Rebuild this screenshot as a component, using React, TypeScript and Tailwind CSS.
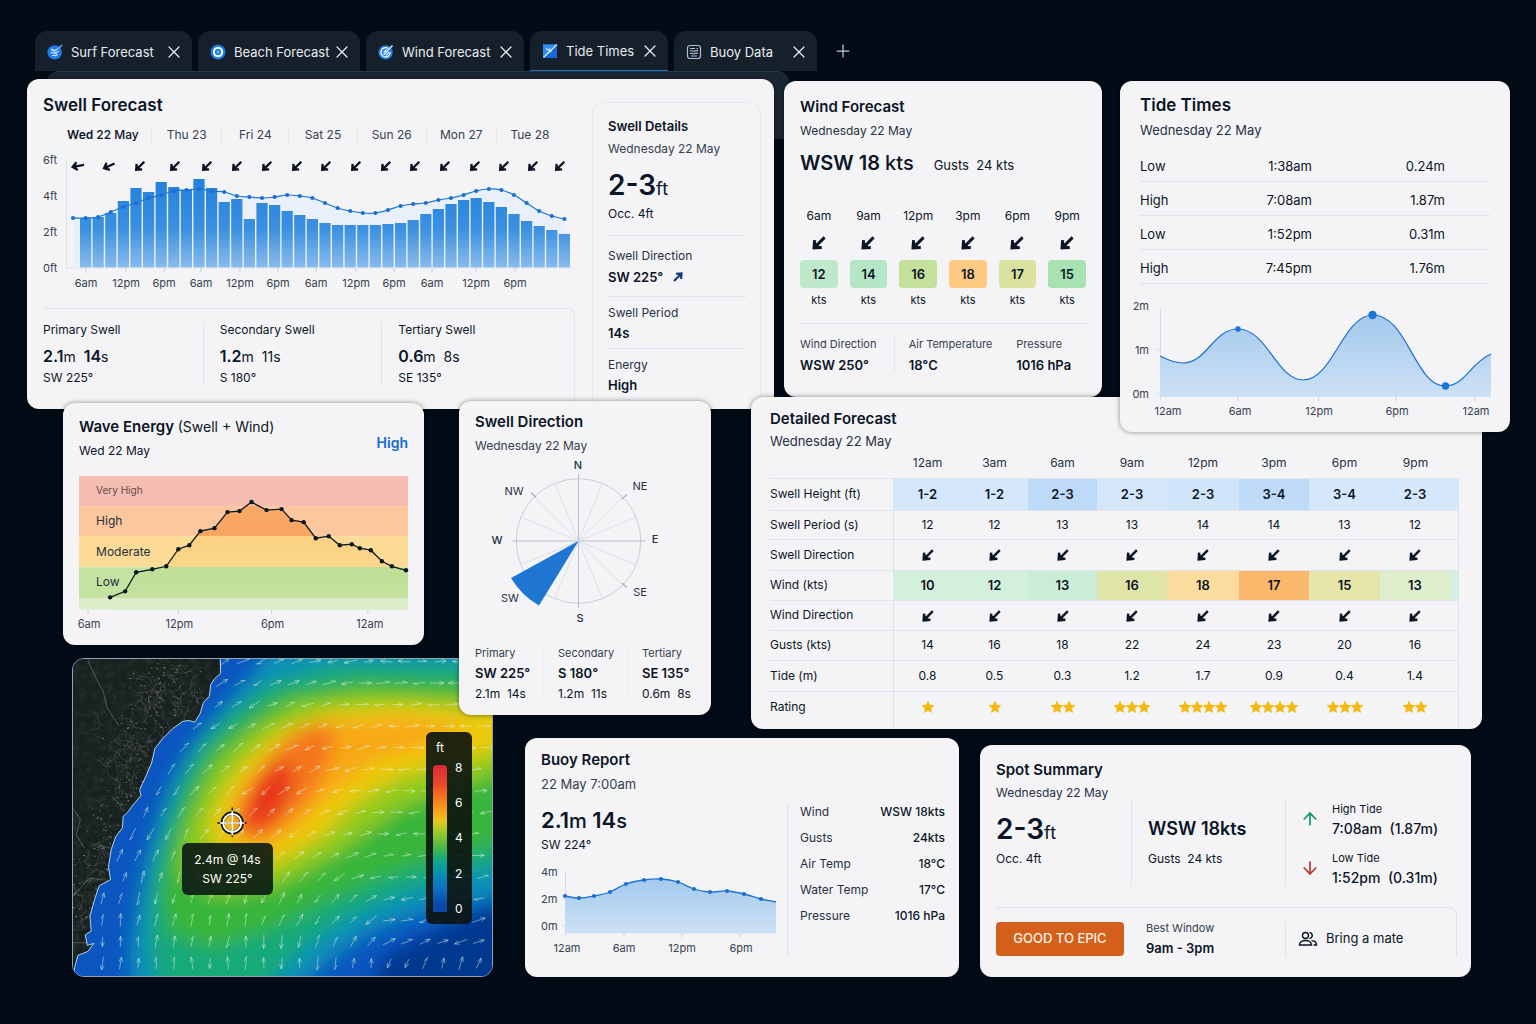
import React from "react";
import { ArrowDown, ArrowUp, Plus, X } from "lucide-react";

const card = "bg-[#f4f4f6] rounded-xl shadow-[0_0_5px_rgba(0,0,0,0.45)] text-[#0c1526]";

type Point = [number, number];

const toLine = (points: Point[]) => points.map((p) => p.join(",")).join(" ");

// Catmull-Rom spline through the points, as cubic beziers
const toCurve = (points: Point[]) => {
    let d = `M${points[0][0]} ${points[0][1]}`;
    for (let i = 0; i < points.length - 1; i++) {
        const p0 = points[i - 1] || points[i];
        const p1 = points[i];
        const p2 = points[i + 1];
        const p3 = points[i + 2] || p2;
        d += ` C${p1[0] + (p2[0] - p0[0]) / 6} ${p1[1] + (p2[1] - p0[1]) / 6} ${p2[0] - (p3[0] - p1[0]) / 6} ${p2[1] - (p3[1] - p1[1]) / 6} ${p2[0]} ${p2[1]}`;
    }
    return d;
};

const ArrowShape: React.FC = () => (
    <>
        <path d="M10.8 1.2 4.2 7.8M2.2 3.6l-.5 6.7 6.7-.5" fill="none" stroke="currentColor" strokeWidth="2.5" />
        <path d="M2.2 4.6v5.2h5.2z" fill="currentColor" />
    </>
);

const DirArrow: React.FC<{ className?: string }> = ({ className = "size-3" }) => (
    <svg viewBox="0 0 12 12" className={`inline-block ${className}`} aria-hidden="true">
        <ArrowShape />
    </svg>
);

/* ---------- Tabs ---------- */

const SurfIcon = () => (
    <svg viewBox="0 0 16 16" className="size-4" fill="none">
        <circle cx="7.6" cy="8.4" r="7.2" fill="#1c7be8" />
        <path d="M4 6.5c2-2 3 1 5-.5s2-1 3-2M3.6 9c2-1.5 3 1.2 5 0s2-1.5 3.4-1.5M5 11.8c1.5-1 2.5.6 4.500-.6M4.500 4.500l6 7" stroke="#cfe5ff" strokeWidth="1.1" />
        <path d="m11 5 4-4" stroke="#5aa6ff" strokeWidth="1.6" />
    </svg>
);

const BeachIcon = () => (
    <svg viewBox="0 0 16 16" className="size-4" fill="none">
        <circle cx="8" cy="8" r="7.5" fill="#1c7be8" />
        <circle cx="8" cy="8" r="4.2" stroke="#fff" strokeWidth="2" />
        <circle cx="8" cy="8" r="1.5" fill="#6db1ff" />
    </svg>
);

const WindIcon = () => (
    <svg viewBox="0 0 16 16" className="size-4" fill="none">
        <circle cx="7.6" cy="8.4" r="7.2" fill="#1c7be8" />
        <path d="M10.5 4.6A4.7 4.7 0 1 0 12.3 8" stroke="#fff" strokeWidth="1.3" />
        <path d="M5.5 11l9-9.5M5.5 8.5l3-3M8 11.5l3-3.5" stroke="#d8eaff" strokeWidth="1.4" />
    </svg>
);

const TideIcon = () => (
    <svg viewBox="0 0 16 16" className="size-4" fill="none">
        <path d="M1 1.5h14V15H1z" fill="#1668d8" />
        <path d="M1 1.5h14L1 15z" fill="#2f8cf5" />
        <path d="M1.5 14.5 15 1.5M4 5.500l3 2 1-2M7 9.500l3-2" stroke="#d8eaff" strokeWidth="1.2" />
    </svg>
);

const BuoyIcon = () => (
    <svg viewBox="0 0 16 16" className="size-4" fill="none" stroke="#a9c0da" strokeWidth="1.2">
        <rect x="1.5" y="1.5" width="13" height="13" rx="2.5" />
        <path d="M4 4.5h5M4 7c2-1 3 1 4.5 0s2 0 3.5-.5M4 9.5c2-1 3 1 4.5 0s2 0 3.5-.5M5 12h6M10.5 4.5H12" />
    </svg>
);

const tabs = [
    { label: "Surf Forecast", icon: <SurfIcon />, style: "w-[157px]" },
    { label: "Beach Forecast", icon: <BeachIcon />, style: "w-[162px]" },
    { label: "Wind Forecast", icon: <WindIcon />, style: "w-[158px]" },
    { label: "Tide Times", icon: <TideIcon />, style: "w-[138px] border-b border-[#1f72b8]" },
    { label: "Buoy Data", icon: <BuoyIcon />, style: "w-[143px]" },
];

const TabBar: React.FC = () => (
    <nav className="flex items-center gap-1.5 pl-2">
        {tabs.map((tab) => (
            <div key={tab.label} className={`flex h-10 items-center rounded-t-xl bg-[#15202b] pt-px pr-2 pl-3 text-[#e9edf2] ${tab.style}`}>
                <button className="flex items-center gap-2 text-[13px] leading-5 whitespace-nowrap">
                    {tab.icon}
                    {tab.label}
                </button>
                <button className="ml-auto" aria-label={`Close ${tab.label}`}>
                    <X className="size-5" strokeWidth={1.5} />
                </button>
            </div>
        ))}
        <button className="ml-2.5 text-[#c3cad3]" aria-label="New tab">
            <Plus className="size-5" strokeWidth={1.5} />
        </button>
    </nav>
);

/* ---------- Swell forecast ---------- */

const days = ["Thu 23", "Fri 24", "Sat 25", "Sun 26", "Mon 27", "Tue 28"];
const swellArrows = [78, 109, 140, 175, 207, 237, 267, 297, 326, 356, 386, 415, 445, 475, 504, 533, 560];
const swellBars = [
    218, 217, 213, 201, 188, 192, 182, 187, 190, 179, 188, 202, 199, 219, 203, 205, 211, 215, 219, 223,
    225, 225, 225, 225, 224, 223, 220, 214, 209, 204, 200, 198, 202, 207, 214, 221, 226, 230, 234,
];
const swellLine: Point[] = [
    218, 218, 217, 212, 207, 203, 198, 195, 191, 190, 189, 191, 192, 196, 197, 198, 197, 195, 196, 198,
    203, 208, 211, 213, 213, 210, 206, 204, 203, 200, 198, 195, 191, 189, 190, 195, 203, 211, 216, 219,
].map((y, i) => [73 + i * 12.6, y]);
const swellHours: [number, string][] = [
    [86, "6am"], [126, "12pm"], [164, "6pm"], [201, "6am"], [240, "12pm"], [278, "6pm"],
    [316, "6am"], [356, "12pm"], [394, "6pm"], [432, "6am"], [476, "12pm"], [515, "6pm"],
];

const SwellChart: React.FC = () => (
    <svg viewBox="43 150 536 142" className="mt-[5px] w-full text-[11px]" role="img" aria-label="Swell height by hour">
        <defs>
            <linearGradient id="bar" x1="0" y1="180" x2="0" y2="268" gradientUnits="userSpaceOnUse">
                <stop offset="0" stopColor="#2381dc" />
                <stop offset="0.55" stopColor="#3b90e0" />
                <stop offset="1" stopColor="#8abcec" />
            </linearGradient>
        </defs>
        <path d="M66.5 160v108M66.5 268H573" stroke="#dfe3ea" fill="none" />
        <path d={`${toCurve(swellLine)} L564 268 L73 268Z`} fill="#e9f0fa" />
        {swellBars.map((y, i) => (
            <rect key={i} x={80 + i * 12.6} y={y} width="11.2" height={267.5 - y} fill="url(#bar)" />
        ))}
        <path d={toCurve(swellLine)} fill="none" stroke="#1c74d4" strokeWidth="1.2" />
        {swellLine.map(([x, y]) => (
            <circle key={x} cx={x} cy={y} r="2.1" fill="#1a6fd0" />
        ))}
        {swellArrows.map((x, i) => (
            <g key={x} className="text-[#0b1424]" transform={`translate(${x} 166) rotate(${i < 2 ? 35 - i * 15 : 0}) scale(0.9) translate(-6 -6)`}>
                <ArrowShape />
            </g>
        ))}
        {["6ft", "4ft", "2ft", "0ft"].map((t, i) => (
            <text key={t} x="43" y={164 + i * 36} fill="#36414f">{t}</text>
        ))}
        {swellHours.map(([x, t]) => (
            <g key={x}>
                <path d={`M${x} 268v4`} stroke="#c9cfd8" />
                <text x={x} y="287" textAnchor="middle" fill="#36414f">{t}</text>
            </g>
        ))}
    </svg>
);

const swells = [
    { name: "Primary Swell", height: "2.1", period: "14", dir: "SW 225°", strong: true },
    { name: "Secondary Swell", height: "1.2", period: "11", dir: "S 180°" },
    { name: "Tertiary Swell", height: "0.6", period: "8", dir: "SE 135°" },
];

const SwellForecast: React.FC = () => (
    <section className={`${card} grid grid-cols-[536fr_169fr] gap-[13px] pr-[13px] pl-4`}>
        <div className="pt-4">
            <h2 className="text-[17px] leading-5 font-semibold">Swell Forecast</h2>
            <div className="mt-2.5 mr-4 ml-6 grid grid-cols-[84fr_70fr_67fr_68fr_69fr_70fr_67fr] text-[12px] leading-5 text-[#36414f]">
                <span className="font-semibold text-[#0c1526]">Wed <span className="font-medium">22 May</span></span>
                {days.map((d) => (
                    <span key={d} className="border-l border-[#e6e9ee] text-center">{d}</span>
                ))}
            </div>
            <SwellChart />
            <div className="mt-4 mr-1 grid grid-cols-[160fr_179fr_193fr] rounded-tr-lg border-t border-r border-[#e1e5eb] pt-[13px] pb-5">
                {swells.map((s, i) => (
                    <div key={s.name} className={i > 0 ? "border-l border-[#e1e5eb] pl-4" : ""}>
                        <p className="text-[12px] leading-4">{s.name}</p>
                        <p className="mt-2 h-5 text-[14px] leading-5">
                            <b className="text-[16px] font-semibold">{s.height}</b>m{" "}
                            {s.strong ? <b className="ml-1 text-[16px] font-semibold">{s.period}</b> : <span className="ml-1">{s.period}</span>}s
                        </p>
                        <p className="mt-1 text-[12px] leading-4">{s.dir}</p>
                    </div>
                ))}
            </div>
        </div>
        <aside className="mt-[23px] rounded-t-xl border-x border-t border-[#e6e9ee] pt-[15px] pr-3.5 pb-4 pl-[15px]">
            <h3 className="text-[13px] leading-4 font-semibold">Swell Details</h3>
            <p className="mt-[7px] text-[12px] leading-4 text-[#36414f]">Wednesday 22 May</p>
            <p className="mt-3 h-8 text-[18px] leading-8"><b className="text-[28px] font-semibold">2-3</b>ft</p>
            <p className="mt-[5px] text-[12px] leading-4">Occ. 4ft</p>
            <div className="mt-[13px] border-t border-[#dfe3ea] pt-3 pb-[11px]">
                <p className="text-[12px] leading-4 text-[#273142]">Swell Direction</p>
                <p className="mt-[5px] flex items-center gap-2.5 text-[13px] leading-4 font-semibold">
                    SW 225° <DirArrow className="size-2.5 rotate-180 text-[#123a7c]" />
                </p>
            </div>
            <div className="border-t border-[#dfe3ea] pt-2 pb-[7px]">
                <p className="text-[12px] leading-4 text-[#273142]">Swell Period</p>
                <p className="mt-1 text-[13px] leading-4 font-semibold">14s</p>
            </div>
            <div className="border-t border-[#dfe3ea] pt-2">
                <p className="text-[12px] leading-4 text-[#273142]">Energy</p>
                <p className="mt-1 text-[13px] leading-4 font-semibold">High</p>
            </div>
        </aside>
    </section>
);

/* ---------- Wind forecast ---------- */

const winds = [
    { time: "6am", speed: 12, color: "bg-[#bde8ca]" },
    { time: "9am", speed: 14, color: "bg-[#b5e6c6]" },
    { time: "12pm", speed: 16, color: "bg-[#c4e09a]" },
    { time: "3pm", speed: 18, color: "bg-[#fdca84]" },
    { time: "6pm", speed: 17, color: "bg-[#dbe2a0]" },
    { time: "9pm", speed: 15, color: "bg-[#a9e2b2]" },
];

const WindForecast: React.FC = () => (
    <section className={`${card} mt-0.5 ml-2.5 px-4 pt-4 pb-6`}>
        <h2 className="text-[15px] leading-5 font-semibold">Wind Forecast</h2>
        <p className="mt-1.5 text-[12px] leading-4 text-[#273142]">Wednesday 22 May</p>
        <div className="mt-3 flex h-6 items-baseline gap-5 leading-6">
            <p className="text-[20px] font-semibold">WSW 18 <span className="font-medium">kts</span></p>
            <p className="text-[13px]">Gusts&nbsp; 24 kts</p>
        </div>
        <div className="mt-[33px] grid grid-cols-6 gap-3 text-center text-[12px] leading-4">
            {winds.map((w) => (
                <div key={w.time}>
                    <p>{w.time}</p>
                    <DirArrow className="mt-3 size-3.5 align-top" />
                    <p className={`mt-2.5 rounded-sm text-[13px] leading-7 font-semibold ${w.color}`}>{w.speed}</p>
                    <p className="mt-1 text-[11px]">kts</p>
                </div>
            ))}
        </div>
        <div className="mt-[15px] grid grid-cols-[94fr_123fr_70fr] border-t border-[#e1e5eb] pt-3">
            <div>
                <p className="text-[11px] leading-4 text-[#36414f]">Wind Direction</p>
                <p className="mt-[5px] text-[13px] leading-4 font-semibold">WSW 250°</p>
            </div>
            <div className="border-l border-[#e1e5eb] pl-3.5">
                <p className="text-[11px] leading-4 text-[#36414f]">Air Temperature</p>
                <p className="mt-[5px] text-[13px] leading-4 font-semibold">18°C</p>
            </div>
            <div className="whitespace-nowrap">
                <p className="text-[11px] leading-4 text-[#36414f]">Pressure</p>
                <p className="mt-[5px] text-[13px] leading-4 font-semibold">1016 hPa</p>
            </div>
        </div>
    </section>
);

/* ---------- Tide times ---------- */

const tides = [
    ["Low", "1:38am", "0.24m"],
    ["High", "7:08am", "1.87m"],
    ["Low", "1:52pm", "0.31m"],
    ["High", "7:45pm", "1.76m"],
];

const tideCurve =
    "M40 275C48 279 55 282 63 282C87 282 93 248 118 248C147 248 157 299 183 299C213 299 223 234 253 234C287 234 295 305 325 305C345 305 350 282 371 273";

const TideTimes: React.FC = () => (
    <section className={`${card} relative z-10 mt-0.5 px-5 pt-3.5`}>
        <h2 className="text-[17px] leading-5 font-semibold">Tide Times</h2>
        <p className="mt-[7px] text-[13px] leading-4 text-[#273142]">Wednesday 22 May</p>
        <table className="mt-[9px] w-full text-[13px]">
            <tbody>
                {tides.map(([kind, time, height]) => (
                    <tr key={time} className="h-[34px] border-b border-[#dfe3ea]">
                        <td className="pt-1.5">{kind}</td>
                        <td className="w-[38%] pt-1.5 pr-[45px] text-right">{time}</td>
                        <td className="w-[38%] pt-1.5 pr-[45px] text-right">{height}</td>
                    </tr>
                ))}
            </tbody>
        </table>
        <div className="-mx-5">
            <svg viewBox="0 203 390 148" className="w-full text-[11px]" role="img" aria-label="Tide height">
                <defs>
                    <linearGradient id="tide" x1="0" y1="0" x2="0" y2="1">
                        <stop offset="0" stopColor="#a3c9ed" />
                        <stop offset="1" stopColor="#cde1f5" />
                    </linearGradient>
                </defs>
                <path d="M40.5 227v92M37 269h3M37 313h3" stroke="#d5dbe4" />
                <path d={`${tideCurve}V316H40Z`} fill="url(#tide)" />
                <path d={tideCurve} fill="none" stroke="#1c6fd0" strokeWidth="1.2" />
                <circle cx="118" cy="248" r="2.7" fill="#1a73d9" />
                <circle cx="252.5" cy="234" r="4.2" fill="#1a73d9" />
                <circle cx="325.5" cy="305" r="3.7" fill="#1a73d9" />
                {["2m", "1m", "0m"].map((t, i) => (
                    <text key={t} x="29" y={229 + i * 44} textAnchor="end" fill="#36414f">{t}</text>
                ))}
                {["12am", "6am", "12pm", "6pm", "12am"].map((t, i) => (
                    <text key={i} x={[48, 120, 199, 277, 356][i]} y="334" textAnchor="middle" fill="#36414f">{t}</text>
                ))}
                <path d="M118 316v4M198.5 316v4M276 316v4M355 316v4" stroke="#c9cfd8" />
            </svg>
        </div>
    </section>
);

/* ---------- Wave energy ---------- */

const energy: Point[] = [
    [31, 121], [46, 115], [57, 96], [73, 93], [87, 90], [99, 73], [110, 69], [121, 55], [135, 52],
    [148, 36], [160, 35], [172, 26], [187, 34], [202, 33], [212, 44], [224, 46], [236, 62], [249, 60],
    [260, 69], [272, 68], [280, 72], [291, 74], [302, 85], [312, 90], [326, 94],
];

const WaveEnergy: React.FC = () => (
    <section className={`${card} relative mr-[35px] px-4 pt-3.5`}>
        <div className="flex items-center justify-between">
            <div>
                <h2 className="text-[15px] leading-5 font-semibold">
                    Wave Energy <span className="text-[14px] font-normal">(Swell + Wind)</span>
                </h2>
                <p className="mt-1.5 text-[12px] leading-4">Wed 22 May</p>
            </div>
            <strong className="pt-2.5 text-[14px] leading-5 font-semibold text-[#1769d6]">High</strong>
        </div>
        <svg viewBox="0 0 328 169" className="mt-[17px] w-full overflow-visible text-[11px]" fill="#26303e" role="img" aria-label="Wave energy over the day">
            <defs>
                <linearGradient id="energy" x1="0" y1="0" x2="0" y2="133" gradientUnits="userSpaceOnUse">
                    <stop offset="0.225" stopColor="#f7b9a5" />
                    <stop offset="0.226" stopColor="#f9a967" />
                    <stop offset="0.45" stopColor="#f9a562" />
                    <stop offset="0.451" stopColor="#fbd182" />
                    <stop offset="0.684" stopColor="#fbd68c" />
                    <stop offset="0.685" stopColor="#bfdf97" />
                    <stop offset="0.917" stopColor="#c4e19f" />
                    <stop offset="0.918" stopColor="#dbecc9" />
                </linearGradient>
            </defs>
            <rect width="328" height="30" fill="#f6bdb2" />
            <rect y="30" width="328" height="30" fill="#fcc79f" />
            <rect y="60" width="328" height="31" fill="#fcdb97" />
            <rect y="91" width="328" height="31" fill="#c4e2a1" />
            <rect y="122" width="328" height="11" fill="#dbecc9" />
            <path d={`M${toLine(energy)} 328,133 31,133Z`} fill="url(#energy)" />
            <polyline points={toLine(energy)} fill="none" stroke="#0c1820" strokeWidth="1.3" />
            {energy.map(([x, y]) => (
                <circle key={x} cx={x} cy={y} r="2.2" fill="#0c1820" />
            ))}
            <text x="17" y="18" className="text-[10px]" fill="#6a4a48">Very High</text>
            <text x="17" y="49" className="text-[12px]">High</text>
            <text x="17" y="80" className="text-[12px]">Moderate</text>
            <text x="17" y="110" className="text-[12px]">Low</text>
            <path d="M9 133v4M99 133v4M192 133v4M288 133v4" stroke="#c9cfd8" />
            {["6am", "12pm", "6pm", "12am"].map((t, i) => (
                <text key={t} x={[10, 100, 193, 290][i]} y="152" textAnchor="middle" fill="#36414f">{t}</text>
            ))}
        </svg>
    </section>
);

/* ---------- Swell direction ---------- */

const compassLabels: [string, number, number][] = [
    ["N", 119, 68], ["NE", 181, 89], ["E", 196, 142], ["SE", 181, 195],
    ["S", 121, 221], ["SW", 51, 201], ["W", 38, 143], ["NW", 55, 94],
];

const Compass: React.FC = () => (
    <svg viewBox="0 53 252 176" className="w-full text-[11px]" role="img" aria-label="Swell from the south west">
        <circle cx="119.5" cy="140" r="62.3" fill="none" stroke="#c9ced6" />
        {Array.from({ length: 16 }, (_, i) => {
            const a = (i * Math.PI) / 8;
            const r = i % 2 ? 62 : 67;
            return (
                <line
                    key={i}
                    x1="119.5"
                    y1="140"
                    x2={119.5 + r * Math.sin(a)}
                    y2={140 - r * Math.cos(a)}
                    stroke={i % 4 ? "#dcdfe5" : "#b8bec8"}
                />
            );
        })}
        <path d="m72 91.5 5 4.5M163 98l5-4.5M163 182l5 4.5" stroke="#858e9b" />
        <path d="M119.5 140 52 177A77 77 0 0 0 80 204.5Z" fill="#1e76d2" />
        {compassLabels.map(([t, x, y]) => (
            <text key={t} x={x} y={y} textAnchor="middle" fill="#273142" className={t.length === 1 ? "font-medium" : ""}>{t}</text>
        ))}
    </svg>
);

const SwellDirection: React.FC = () => (
    <section className={`${card} relative z-10 mt-1 px-4 pt-[11px] pb-[13px]`}>
        <h2 className="text-[15px] leading-5 font-semibold">Swell Direction</h2>
        <p className="mt-1.5 text-[12px] leading-4 text-[#36414f]">Wednesday 22 May</p>
        <div className="-mx-4">
            <Compass />
        </div>
        <div className="mt-[15px] -mr-3 grid grid-cols-[68fr_84fr_80fr] whitespace-nowrap">
            {swells.map((s, i) => (
                <div key={s.name} className={i > 0 ? "border-l border-[#eceef2] pl-3.5" : ""}>
                    <p className="text-[11px] leading-4 text-[#36414f]">{s.name.split(" ")[0]}</p>
                    <p className="mt-1 text-[13px] leading-4 font-semibold">{s.dir}</p>
                    <p className="mt-[5px] text-[12px] leading-4">{s.height}m&nbsp; {s.period}s</p>
                </div>
            ))}
        </div>
    </section>
);

/* ---------- Detailed forecast ---------- */

const hours = ["12am", "3am", "6am", "9am", "12pm", "3pm", "6pm", "9pm"];
const hourWidths = ["w-[67px]", "w-[67px]", "w-[69px]", "w-[70px]", "w-[72px]", "w-[70px]", "w-[71px]", "w-[79px] pr-2"];
const heights = ["1-2", "1-2", "2-3", "2-3", "2-3", "3-4", "3-4", "2-3"];
const heightColors = [
    "bg-[#d5e7fa]", "bg-[#d5e7fa]", "bg-[#bedaf8]", "bg-[#d5e7fa]",
    "bg-[#d0e4fa]", "bg-[#bfdbf8]", "bg-[#d5e7fa]", "bg-[#d5e7fa]",
];
const windSpeeds = [10, 12, 13, 16, 18, 17, 15, 13];
const windColors = [
    "bg-[#d2f0dc]", "bg-[#d2f0dc]", "bg-[#c9edd8]", "bg-[#dfe4a8]",
    "bg-[#fbdc9f]", "bg-[#fbb86d]", "bg-[#e5e5a8]", "bg-linear-to-r from-[#dfefcd] from-90% to-[#d3f0e0] to-90%",
];
const stars = [1, 1, 2, 3, 4, 4, 3, 2];

const Star: React.FC = () => (
    <svg viewBox="0 0 24 24" className="-mx-px inline-block size-3.5" fill="#f2b90f" aria-hidden="true">
        <path d="m12 1 3.3 7.3 7.9.9-5.9 5.3 1.7 7.9-7-4-7 4 1.7-7.9L.8 9.2l7.9-.9z" />
    </svg>
);

type Row = { label: string; height: string; cells: React.ReactNode[]; colors?: string[]; strong?: boolean };

const rows: Row[] = [
    { label: "Swell Height (ft)", height: "h-8", cells: heights, colors: heightColors, strong: true },
    { label: "Swell Period (s)", height: "h-[29px]", cells: [12, 12, 13, 13, 14, 14, 13, 12] },
    { label: "Swell Direction", height: "h-[31px]", cells: hours.map(() => <DirArrow />) },
    { label: "Wind (kts)", height: "h-[30px]", cells: windSpeeds, colors: windColors, strong: true },
    { label: "Wind Direction", height: "h-[30px]", cells: hours.map(() => <DirArrow />) },
    { label: "Gusts (kts)", height: "h-[30px]", cells: [14, 16, 18, 22, 24, 23, 20, 16] },
    { label: "Tide (m)", height: "h-[31px]", cells: ["0.8", "0.5", "0.3", "1.2", "1.7", "0.9", "0.4", "1.4"] },
    {
        label: "Rating",
        height: "h-[38px]",
        cells: stars.map((n) => (
            <span className="flex justify-center" aria-label={`${n} stars`}>
                {Array.from({ length: n }, (_, i) => <Star key={i} />)}
            </span>
        )),
    },
];

const DetailedForecast: React.FC = () => (
    <section className={`${card} relative pt-3 pr-[23px] pl-[19px]`}>
        <h2 className="text-[15px] leading-5 font-semibold">Detailed Forecast</h2>
        <p className="mt-1 text-[13px] leading-4 text-[#273142]">Wednesday 22 May</p>
        <table className="w-full table-fixed border-separate border-spacing-0 text-center text-[12px]">
            <thead>
                <tr className="h-[29px] text-[#273142]">
                    <th aria-label="Reading" />
                    {hours.map((h, i) => (
                        <th key={h} scope="col" className={`font-normal ${hourWidths[i]}`}>{h}</th>
                    ))}
                </tr>
            </thead>
            <tbody>
                {rows.map((row) => (
                    <tr key={row.label} className={row.height}>
                        <th scope="row" className={`border-t border-r border-[#e1e5eb] text-left font-normal whitespace-nowrap ${row.label === "Rating" ? "pb-1.5" : ""}`}>
                            {row.label}
                        </th>
                        {row.cells.map((cell, i) => (
                            <td
                                key={i}
                                className={`border-t border-[#e1e5eb] leading-4 ${row.strong ? "text-[13px] font-semibold" : ""} ${row.colors ? row.colors[i] : ""} ${i === 7 ? "border-r pr-2" : ""} ${row.label === "Rating" ? "pb-1.5" : ""}`}
                            >
                                {cell}
                            </td>
                        ))}
                    </tr>
                ))}
            </tbody>
        </table>
    </section>
);

/* ---------- Swell map ---------- */

// small seeded generator, so the map looks the same on every load
const seeded = (seed: number) => () => {
    seed = (seed * 16807) % 2147483647;
    return seed / 2147483647;
};

const coast =
    "M465 25L466 68 448 84 436 102 432 138 414 156 404 190 388 215 370 210 352 213 322 234 292 264 268 294 258 338 240 380 222 418 226 436 206 460 186 486 172 500 170 534 150 560 136 600 128 650 134 690 100 708 86 750 72 800 76 845 58 856 64 888 84 882 66 906 36 918 26 955 21 985";

const roads = () => {
    const rnd = seeded(77);
    const centres: Point[] = [[290, 110], [250, 200], [190, 330], [350, 110], [150, 270], [100, 590], [150, 420], [50, 790], [270, 150], [380, 170], [60, 690], [210, 320]];
    const out: string[] = [];
    for (let i = 0; i < 130; i++) {
        const c = centres[i % centres.length];
        let x = c[0] + (rnd() + rnd() - 1) * 70;
        let y = c[1] + (rnd() + rnd() - 1) * 90;
        let a = rnd() * Math.PI * 2;
        let d = `M${x.toFixed(0)} ${y.toFixed(0)}`;
        for (let k = 0; k < 7; k++) {
            a += (rnd() - 0.5) * 1.6;
            x += Math.cos(a) * 7;
            y += Math.sin(a) * 7;
            d += `L${x.toFixed(0)} ${y.toFixed(0)}`;
        }
        out.push(d);
    }
    return out.join("");
};

const lights = () => {
    const rnd = seeded(4242);
    return Array.from({ length: 360 }, () => {
        const y = 30 + rnd() * 780;
        const x = 310 - y * 0.3 + (rnd() + rnd() + rnd() - 1.5) * 110;
        return `M${x.toFixed(0)} ${y.toFixed(0)}h${(1 + rnd() * 4).toFixed(0)}`;
    }).join("");
};

// swell vectors turn from north along the coast to east offshore
const vectors = () => {
    const rnd = seeded(991);
    const out: string[] = [];
    for (let row = 0; row < 15; row++) {
        const y = 32 + row * 65;
        const start = y < 220 ? 480 - row * 10 : Math.max(110, 400 - (y - 220) * 0.6);
        for (let x = start; x < 1280; x += 54) {
            const rx = Math.min(x - 1000, -30);
            const ry = Math.min(y - 940, -10);
            const a = Math.atan2(rx, -ry) + (rnd() - 0.5) * 0.3;
            const len = 14 + rnd() * 7;
            const flip = rnd() < 0.25 ? -1 : 1;
            const c = Math.cos(a) * len * flip;
            const s = Math.sin(a) * len * flip;
            const head = (t: number) =>
                `M${(x + c).toFixed(1)} ${(y + s).toFixed(1)}l${(-Math.cos(a + t) * 15 * flip).toFixed(1)} ${(-Math.sin(a + t) * 15 * flip).toFixed(1)}`;
            out.push(`M${(x - c).toFixed(1)} ${(y - s).toFixed(1)}L${(x + c).toFixed(1)} ${(y + s).toFixed(1)}${head(0.4)}${rnd() < 0.6 ? head(-0.4) : ""}`);
        }
    }
    return out.join("");
};

const roadPath = roads();
const lightPath = lights();
const vectorPath = vectors();

const SwellMap: React.FC = () => (
    <section className="relative mt-[13px] -mr-[34px] ml-[9px] aspect-[421/319] overflow-hidden rounded-xl border border-[#93a5b5] bg-[#0b4db8] text-white">
        <svg viewBox="21 24 1263 957" preserveAspectRatio="xMidYMid slice" className="size-full" role="img" aria-label="Swell height map">
            <defs>
                <filter id="soft" x="-30%" y="-30%" width="160%" height="160%">
                    <feGaussianBlur stdDeviation="28" />
                </filter>
                <filter id="grain" x="0" y="0" width="100%" height="100%">
                    <feTurbulence type="fractalNoise" baseFrequency="0.05" numOctaves="4" seed="3" />
                    <feColorMatrix values="0 0 0 0 0.5  0 0 0 0 0.55  0 0 0 0 0.53  0.9 0 0 0 -0.36" />
                </filter>
                <clipPath id="land">
                    <path d={`${coast}H0V0H465Z`} />
                </clipPath>
            </defs>
            <rect width="1300" height="1000" fill="#0b55c0" />
            <g filter="url(#soft)">
                <path d="M640 -60L560 70 450 190 370 290 310 400 270 520 240 620 215 740 190 900 200 1080 640 1080 800 930 920 850 1080 790 1400 720 1400 -60Z" fill="#0b90b8" />
                <path d="M1400 40L800 40 600 100 480 200 400 290 350 390 310 490 280 600 255 740 250 880 290 1080 540 1080 720 890 860 800 1020 730 1180 680 1400 620Z" fill="#12a97a" />
                <path d="M1400 95L900 85 660 125 520 220 430 300 380 400 340 500 305 610 285 730 310 850 440 900 620 840 800 750 960 680 1150 620 1400 560Z" fill="#38b53a" />
                <path d="M1400 150L900 125 690 155 560 240 460 330 405 430 360 550 340 670 460 740 640 710 820 610 1000 480 1180 410 1400 340Z" fill="#93cb1f" />
                <path d="M1400 190L1000 165 780 185 640 245 540 330 475 420 425 530 470 620 640 640 770 560 870 460 1000 380 1400 270Z" fill="#edc90f" />
                <path d="M1230 225L1000 205 820 210 680 260 580 350 515 440 490 540 600 600 700 530 800 430 930 330 1100 280Z" fill="#f8a818" />
                <ellipse cx="660" cy="395" rx="215" ry="85" transform="rotate(-52 660 395)" fill="#f4761c" />
                <ellipse cx="612" cy="440" rx="115" ry="50" transform="rotate(-60 612 440)" fill="#e8321c" />
                <path d="M1400 740L1260 780 1120 840 960 920 900 1080 1400 1080Z" fill="#06388f" />
            </g>
            <path d={vectorPath} fill="none" stroke="#e4f8e8" strokeOpacity="0.55" strokeWidth="2.6" />
            <path d={`${coast}H0V0H465Z`} fill="#18211f" />
            <g clipPath="url(#land)" fill="none">
                <rect width="480" height="1000" filter="url(#grain)" opacity="0.22" />
                <path d={roadPath} stroke="#c3bcc0" strokeOpacity="0.42" strokeWidth="1.3" />
                <path d={lightPath} stroke="#e8e2e4" strokeOpacity="0.65" strokeWidth="2.2" />
                <path d="M66 30l24 52 22 40 12 50 36 55M21 475l22 35-12 45 24 40M21 740l50-55 40 6M21 880h60" stroke="#aab0b0" strokeOpacity="0.6" strokeWidth="2" />
            </g>
            <path d={coast} fill="none" stroke="#b9d3e6" strokeWidth="3" />
            <g fill="none">
                <path d="M501 472v90M456 519h88" stroke="#0d1512" strokeWidth="4" />
                <circle cx="501" cy="519" r="29" stroke="#0d1512" strokeWidth="12" />
                <circle cx="501" cy="519" r="27" stroke="#fff" strokeWidth="6" />
                <path d="M501 482v74M464 519h74" stroke="#fff" strokeWidth="5" />
            </g>
        </svg>
        <div className="absolute top-[58%] left-[26%] w-[91px] rounded-md bg-[#0a1a14]/90 py-[7px] text-center text-[12px] leading-[19px]">
            <p>2.4m @ 14s</p>
            <p>SW 225°</p>
        </div>
        <div className="absolute top-[23%] right-5 w-[46px] rounded-md bg-[#0b1210]/90 px-[7px] pt-2 pb-[7px] text-[12px]">
            <p className="pl-[3px] leading-4">ft</p>
            <div className="mt-1 flex gap-2">
                <div className="my-[5px] w-3.5 rounded-t-sm bg-[linear-gradient(#d92a3a,#e8432a_12%,#f4761f_22%,#f9a51a_32%,#e6c51b_38%,#a2cc2a_45%,#4db748_56%,#1eae6e_62%,#0ba39b_68%,#0a78c8_82%,#0a49ab_95%)]" />
                <div className="flex h-[157px] flex-col justify-between leading-4">
                    {[8, 6, 4, 2, 0].map((n) => (
                        <span key={n}>{n}</span>
                    ))}
                </div>
            </div>
        </div>
    </section>
);

/* ---------- Buoy report ---------- */

const buoy: Point[] = [
    [24, 31], [38, 33], [53, 31], [69, 27], [85, 19], [103, 15], [120, 14],
    [137, 17], [153, 24], [169, 27], [186, 26], [203, 29], [220, 34], [235, 37],
];

const readings = [
    ["Wind", "WSW 18kts"],
    ["Gusts", "24kts"],
    ["Air Temp", "18°C"],
    ["Water Temp", "17°C"],
    ["Pressure", "1016 hPa"],
];

const BuoyReport: React.FC = () => (
    <section className={`${card} pt-3 pr-3.5 pb-5 pl-4`}>
        <h2 className="text-[15px] leading-5 font-semibold">Buoy Report</h2>
        <p className="mt-1.5 text-[13px] leading-4 text-[#36414f]">22 May 7:00am</p>
        <div className="mt-3 grid grid-cols-[235fr_158fr] gap-[11px]">
            <div className="pt-1">
                <p className="h-6 text-[20px] leading-6 font-medium">
                    <b className="text-[22px] font-semibold">2.1</b>m <b className="text-[22px] font-semibold">14</b>s
                </p>
                <p className="mt-[5px] text-[12px] leading-4">SW 224°</p>
                <svg viewBox="0 0 235 92" className="mt-3 w-full overflow-visible text-[11px]" fill="#36414f" role="img" aria-label="Buoy wave height">
                    <path d="M24.5 7v64M21 34h3M21 61h3" stroke="#d5dbe4" />
                    <path d={`${toCurve(buoy)}V68.5H24Z`} fill="url(#tide)" />
                    <path d={toCurve(buoy)} fill="none" stroke="#1c74d4" strokeWidth="1.3" />
                    {buoy.slice(0, -1).map(([x, y]) => (
                        <circle key={x} cx={x} cy={y} r="2.1" fill="#1a6fd0" />
                    ))}
                    <path d="M83 68.5v4M141 68.5v4M199 68.5v4" stroke="#c9cfd8" />
                    {["4m", "2m", "0m"].map((t, i) => (
                        <text key={t} x="0" y={11 + i * 27}>{t}</text>
                    ))}
                    {["12am", "6am", "12pm", "6pm"].map((t, i) => (
                        <text key={t} x={[26, 83, 141, 200][i]} y="87" textAnchor="middle">{t}</text>
                    ))}
                </svg>
            </div>
            <dl className="flex flex-col gap-2.5 border-l border-[#dfe3ea] pl-3 text-[12px] leading-4">
                {readings.map(([name, value]) => (
                    <div key={name} className="flex justify-between">
                        <dt className="text-[#273142]">{name}</dt>
                        <dd className="font-medium">{value}</dd>
                    </div>
                ))}
            </dl>
        </div>
    </section>
);

/* ---------- Spot summary ---------- */

const SpotSummary: React.FC = () => (
    <section className={`${card} pt-[15px] pr-3.5 pb-[21px] pl-4`}>
        <h2 className="text-[15px] leading-5 font-semibold">Spot Summary</h2>
        <p className="mt-[5px] text-[12px] leading-4 text-[#273142]">Wednesday 22 May</p>
        <div className="grid grid-cols-[135fr_154fr_172fr]">
            <div className="pt-3">
                <p className="h-8 text-[18px] leading-8"><b className="text-[28px] font-semibold">2-3</b>ft</p>
                <p className="mt-1.5 text-[12px] leading-4">Occ. 4ft</p>
            </div>
            <div className="border-l border-[#dfe3ea] pt-3 pl-4">
                <p className="text-[18px] leading-8 font-semibold">WSW 18kts</p>
                <p className="mt-1.5 text-[12px] leading-4">Gusts&nbsp; 24 kts</p>
            </div>
            <div className="border-l border-[#dfe3ea] pl-3.5">
                <div className="flex items-center gap-3">
                    <ArrowUp className="size-5 text-[#15925a]" strokeWidth={2} />
                    <div>
                        <p className="text-[11px] leading-4">High Tide</p>
                        <p className="mt-1 text-[14px] leading-4 font-medium">7:08am&nbsp; (1.87m)</p>
                    </div>
                </div>
                <div className="mt-[13px] flex items-center gap-3">
                    <ArrowDown className="size-5 text-[#c0302c]" strokeWidth={2} />
                    <div>
                        <p className="text-[11px] leading-4">Low Tide</p>
                        <p className="mt-1 text-[14px] leading-4 font-medium">1:52pm&nbsp; (0.31m)</p>
                    </div>
                </div>
            </div>
        </div>
        <div className="mt-[21px] grid grid-cols-[135fr_154fr_171fr] rounded-tr-lg border-t border-r border-[#dfe3ea] pt-3.5">
            <button className="mr-[7px] h-[34px] rounded-sm bg-[#d4601c] text-[13px] font-medium text-[#fff3e6]">GOOD TO EPIC</button>
            <div className="pl-[15px]">
                <p className="text-[11px] leading-3 text-[#36414f]">Best Window</p>
                <p className="mt-1.5 text-[13px] leading-4 font-semibold">9am - 3pm</p>
            </div>
            <button className="flex items-center gap-2 border-l border-[#dfe3ea] pl-3 text-[13px]">
                <svg viewBox="0 0 20 16" className="h-4 w-5" fill="none" stroke="currentColor" strokeWidth="1.4" strokeLinecap="round">
                    <circle cx="7.5" cy="4.5" r="3" />
                    <path d="M1.5 14c0-6 12-6 12 0zM12 1.6a3 3 0 0 1 0 5.8M14 9.6c3 .4 4.5 2 4.5 4.4H16" />
                </svg>
                Bring a mate
            </button>
        </div>
    </section>
);

const App: React.FC = () => {
    return (
        <main className="min-h-screen bg-[#020b16] pt-[31px] pr-[26px] pb-[47px] pl-[27px] font-[Inter,sans-serif]">
            <TabBar />
            <div className="-mb-[60px] ml-5 h-[68px] w-1/2 rounded-t-xl border-t border-[#22384a] bg-[#1a2632]" />
            <div className="relative grid grid-cols-[747fr_328fr_408fr] items-start">
                <SwellForecast />
                <WindForecast />
                <div className="pl-[18px]">
                    <TideTimes />
                </div>
            </div>
            <div className="-mt-[35px] grid grid-cols-[396fr_1023fr] pr-7 pl-9">
                <div className="pt-1.5">
                    <WaveEnergy />
                    <SwellMap />
                </div>
                <div>
                    <div className="grid grid-cols-[252fr_731fr] items-start gap-10">
                        <SwellDirection />
                        <DetailedForecast />
                    </div>
                    <div className="mt-[9px] grid grid-cols-[434fr_491fr] items-end gap-[21px] pr-[11px] pl-[66px]">
                        <BuoyReport />
                        <SpotSummary />
                    </div>
                </div>
            </div>
        </main>
    );
};

export default App;
